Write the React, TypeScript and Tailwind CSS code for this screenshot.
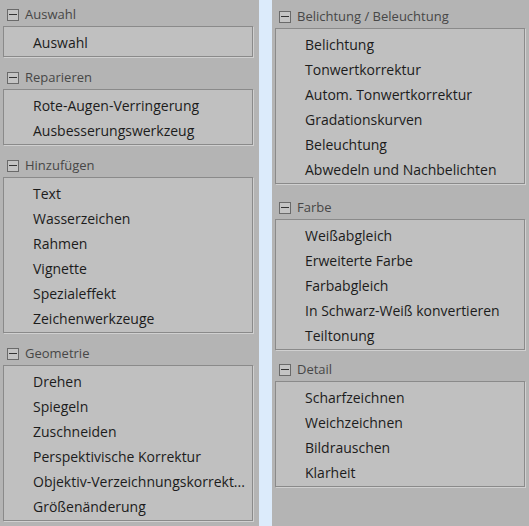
const left = [
  { title: "Auswahl", items: ["Auswahl"] },
  { title: "Reparieren", items: ["Rote-Augen-Verringerung", "Ausbesserungswerkzeug"] },
  {
    title: "Hinzufügen",
    items: ["Text", "Wasserzeichen", "Rahmen", "Vignette", "Spezialeffekt", "Zeichenwerkzeuge"],
  },
  {
    title: "Geometrie",
    items: [
      "Drehen",
      "Spiegeln",
      "Zuschneiden",
      "Perspektivische Korrektur",
      "Objektiv-Verzeichnungskorrekt...",
      "Größenänderung",
    ],
  },
]

const right = [
  {
    title: "Belichtung / Beleuchtung",
    items: [
      "Belichtung",
      "Tonwertkorrektur",
      "Autom. Tonwertkorrektur",
      "Gradationskurven",
      "Beleuchtung",
      "Abwedeln und Nachbelichten",
    ],
    className: "",
  },
  {
    title: "Farbe",
    items: ["Weißabgleich", "Erweiterte Farbe", "Farbabgleich", "In Schwarz-Weiß konvertieren", "Teiltonung"],
    className: "mt-[9px]",
  },
  { title: "Detail", items: ["Scharfzeichnen", "Weichzeichnen", "Bildrauschen", "Klarheit"], className: "mt-[5px]" },
]

function Section({ title, items, className = "" }: { title: string; items: string[]; className?: string }) {
  return (
    <div className={className}>
      {/* Header with collapse box */}
      <div className="flex h-[26px] items-center gap-[6px] pl-[4px] pt-[3px]">
        <span className="flex h-[12px] w-[12px] items-center justify-center border border-[#6a6a6a] bg-[#c4c4c4]">
          <span className="h-px w-[8px] bg-[#333]" />
        </span>
        <span className="text-[13px] text-[#474747]">{title}</span>
      </div>
      {/* Items */}
      <div className="border border-[#8a8a8a] bg-[#c0c0c0] pb-[1px] pt-[3px] shadow-[1px_1px_0_#d0d0d0]">
        {items.map((item) => (
          <div key={item} className="flex h-[25px] items-center pl-[29px] text-[14px] text-[#1c1c1c]">
            {item}
          </div>
        ))}
      </div>
    </div>
  )
}

export default function App() {
  return (
    <div
      className="flex h-[526px] w-[529px] overflow-hidden bg-[#b4b4b4]"
      style={{ fontFamily: '"Open Sans", "Noto Sans", sans-serif' }}
    >
      <div className="flex w-[259px] flex-col gap-[6px] pl-[3px] pr-[6px]">
        {left.map((s) => (
          <Section key={s.title} {...s} />
        ))}
      </div>
      <div className="w-[13px] bg-[#dcebfb]" />
      <div className="flex flex-1 flex-col pl-[3px] pr-[4px] pt-[2px]">
        {right.map((s) => (
          <Section key={s.title} {...s} />
        ))}
      </div>
    </div>
  )
}
